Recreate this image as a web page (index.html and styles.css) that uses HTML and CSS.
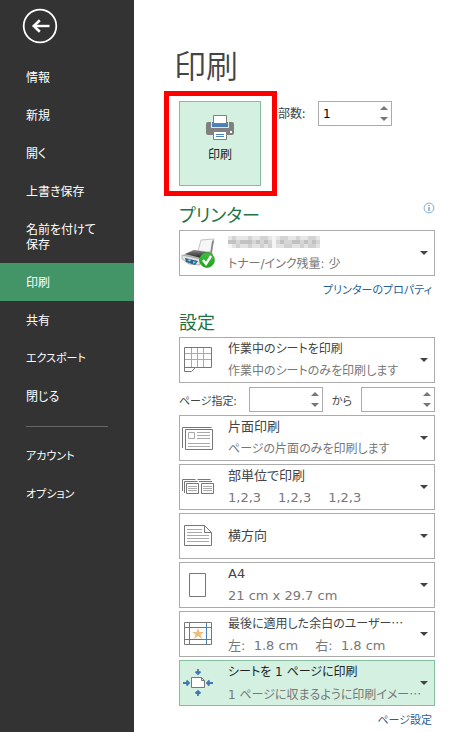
FILE: index.html
```html
<!DOCTYPE html>
<html lang="ja">
<head>
  <meta charset="UTF-8">
  <title>印刷</title>
  <link rel="stylesheet" href="styles.css">
</head>
<body>
  <nav class="sidebar">
    <button class="back" type="button" aria-label="戻る">
      <svg width="36" height="36" viewBox="0 0 36 36" fill="none" stroke="#fff">
        <circle cx="18" cy="18" r="16.3" stroke-width="1.8"/>
        <path d="M27.5 18H12" stroke-width="2.4"/>
        <path d="M17.8 12.3L11.8 18l6 5.700" stroke-width="2.6"/>
      </svg>
    </button>
    <a href="#">情報</a>
    <a href="#">新規</a>
    <a href="#">開く</a>
    <a href="#">上書き保存</a>
    <a href="#">名前を付けて<br>保存</a>
    <a href="#" class="active">印刷</a>
    <a href="#">共有</a>
    <a href="#" class="kana">エクスポート</a>
    <a href="#">閉じる</a>
    <hr>
    <a href="#" class="kana">アカウント</a>
    <a href="#" class="kana">オプション</a>
  </nav>

  <main>
    <h1>印刷</h1>

    <div class="panel">
      <div class="print-row">
        <div class="highlight">
          <button class="print-button" type="button">
            <svg width="28" height="25" viewBox="0 0 28 25">
              <path d="M2 7h24q2 0 2 2v9q0 2-2 2H2q-2 0-2-2V9q0-2 2-2z" fill="#808080"/>
              <path d="M5 6h18v7H5z" fill="#d3f0e0"/>
              <path d="M6 7h16v5H6z" fill="#4a80b8"/>
              <path d="M7.5 .5h13v8h-13zM7.5 16.5h13v8h-13z" fill="#fff" stroke="#808080"/>
              <path d="M10 19.5h8M10 21.5h8" stroke="#4a80b8"/>
              <path d="M24 16h2v2h-2z" fill="#fff"/>
            </svg>
            <span>印刷</span>
          </button>
        </div>
        <label class="copies-label" for="copies">部数:</label>
        <div class="spinner">
          <input id="copies" type="text" inputmode="numeric" value="1">
          <button class="up" type="button" aria-label="部数を増やす"></button>
          <button class="down" type="button" aria-label="部数を減らす"></button>
        </div>
      </div>

      <div class="section-head">
        <h2>プリンター</h2>
        <svg class="info" width="12" height="12" viewBox="0 0 12 12" fill="none">
          <circle cx="6" cy="6" r="4.9" stroke="#7fb0dc"/>
          <path d="M6 5v4M6 3v1" stroke="#3c6fb4"/>
        </svg>
      </div>
      <button class="option" type="button" aria-haspopup="listbox">
        <svg class="icon" width="36" height="30" viewBox="0 0 36 30">
          <defs>
            <linearGradient id="body" x1="0" y1="0" x2="0" y2="1">
              <stop offset="0" stop-color="#888"/><stop offset="1" stop-color="#222"/>
            </linearGradient>
            <linearGradient id="ok" x1="0" y1="0" x2="0" y2="1">
              <stop offset="0" stop-color="#45bd45"/><stop offset="1" stop-color="#1fa51c"/>
            </linearGradient>
          </defs>
          <path d="M20 2l13-1-3 13-13-1z" fill="#f6f6f6" stroke="#c4c4c4"/>
          <path d="M31 3l2-1-2 13-2 1z" fill="#888"/>
          <path d="M2 17l11-5 19 3v4l-13 5-16-4z" fill="#bbb"/>
          <path d="M4 16l9-4 18 3-11 5z" fill="url(#body)"/>
          <path d="M1 17l18 4v6l-11-1-7-5z" fill="#e4e4e4" stroke="#999" stroke-width=".7"/>
          <path d="M4 20l13 3-3 4-9-3z" fill="#315f85"/>
          <path d="M6 22l4-1-1 3zM12 23l3 1-3 2z" fill="#6fd0ed"/>
          <circle cx="26" cy="22" r="7.5" fill="url(#ok)" stroke="#239b20" stroke-width=".6"/>
          <path d="M22 22l3 4 5-8" fill="none" stroke="#fff" stroke-width="2.4"/>
        </svg>
        <span class="text">
          <svg class="masked" width="92" height="12" viewBox="0 0 23 3" shape-rendering="crispEdges" stroke-width="1">
            <path d="M0 .5h23" stroke="#e6e6e6"/>
            <path d="M0 1.5h23" stroke="#d6d6d6"/>
            <path d="M0 2.5h23" stroke="#e2e2e2"/>
            <path d="M1 .5h1M5 .5h1M8 .5h2M13 .5h2M17 .5h1M20 .5h2" stroke="#d4d4d4"/>
            <path d="M0 1.5h2M3 1.5h3M7 1.5h1M9 1.5h1M13 1.5h1M16 1.5h2M19 1.5h1M21 1.5h1" stroke="#c2c2c2"/>
            <path d="M2 2.5h1M5 2.5h1M8 2.5h1M10 2.5h1M14 2.5h2M18 2.5h1M20 2.5h2" stroke="#d0d0d0"/>
            <path d="M11 .5h1M11 1.5h1M11 2.5h1M0 2.5h1" stroke="#f4f4f4"/>
          </svg>
          <small>トナー/インク残量: 少</small>
        </span>
      </button>
      <div class="link-row"><a href="#">プリンターのプロパティ</a></div>

      <div class="section-head settings-head">
        <h2>設定</h2>
      </div>
      <div class="options">
        <button class="option" type="button" aria-haspopup="listbox">
          <svg class="icon" width="36" height="30" viewBox="0 0 36 30" fill="none">
            <path d="M10.5 3v20M16.5 3v20M22.5 3v20M4 8.5h26M4 14.5h26" stroke="#aaa"/>
            <path d="M3.5 2.5h27v20h-16l-4 4h-7zM3.5 22.5h11" stroke="#777"/>
          </svg>
          <span class="text"><b>作業中のシートを印刷</b><small>作業中のシートのみを印刷します</small></span>
        </button>

        <div class="pages-row">
          <label class="pages-label" for="from">ページ指定:</label>
          <div class="spinner">
            <input id="from" type="text" inputmode="numeric">
            <button class="up" type="button" aria-label="開始ページを増やす"></button>
            <button class="down" type="button" aria-label="開始ページを減らす"></button>
          </div>
          <label class="to-label" for="to">から</label>
          <div class="spinner">
            <input id="to" type="text" inputmode="numeric">
            <button class="up" type="button" aria-label="終了ページを増やす"></button>
            <button class="down" type="button" aria-label="終了ページを減らす"></button>
          </div>
        </div>

        <button class="option" type="button" aria-haspopup="listbox">
          <svg class="icon" width="36" height="30" viewBox="0 0 36 30" fill="none">
            <path d="M1.5 25V4.5h29M4.5 6.5h27v20h-27z" stroke="#777"/>
            <path d="M7.5 9.5h6v6h-6zM16 9.5h13M16 12.5h13M16 15.5h13M7 20.5h22M7 23.5h22" stroke="#aaa"/>
          </svg>
          <span class="text"><b class="wide">片面印刷</b><small>ページの片面のみを印刷します</small></span>
        </button>

        <button class="option" type="button" aria-haspopup="listbox">
          <svg class="icon" width="36" height="30" viewBox="0 0 36 30" fill="none">
            <path d="M1.5 19V7.5h13M3.5 21V9.5h13M16.5 7.5h13M18 9.5h13" stroke="#777"/>
            <path d="M5.5 11.5h12v10h-12zM20.5 11.5h12v10h-12z" stroke="#777"/>
            <path d="M7 14.5h9M7 16.5h9M7 18.5h9M22 14.5h9M22 16.5h9M22 18.5h9" stroke="#aaa"/>
          </svg>
          <span class="text"><b class="wide">部単位で印刷</b><small class="wide columns"><i>1,2,3</i><i>1,2,3</i><i>1,2,3</i></small></span>
        </button>

        <button class="option" type="button" aria-haspopup="listbox">
          <svg class="icon" width="36" height="30" viewBox="0 0 36 30" fill="none">
            <path d="M3.5 4.5h20l7 7v13h-27zM23.5 4.5v7h7" stroke="#777"/>
            <path d="M6 8.5h15M6 11.5h15M6 14.5h22M6 17.5h22M6 20.5h22" stroke="#aaa"/>
          </svg>
          <span class="text"><b class="wide">横方向</b></span>
        </button>

        <button class="option" type="button" aria-haspopup="listbox">
          <svg class="icon" width="36" height="30" viewBox="0 0 36 30" fill="none">
            <path d="M8.5 3.5h16v23h-16z" fill="#fff" stroke="#777"/>
          </svg>
          <span class="text"><b class="wide">A4</b><small class="wide">21 cm x 29.7 cm</small></span>
        </button>

        <button class="option" type="button" aria-haspopup="listbox">
          <svg class="icon" width="36" height="30" viewBox="0 0 36 30" fill="none">
            <path d="M3.5 3.5h27v22h-27z" stroke="#777"/>
            <path d="M8.5 4v21M25.5 4v21M4 8.5h26M4 20.5h26" stroke="#4a80b8"/>
            <path d="M17 9l1.5 4H23l-3.5 2.5L21 20l-4-3-4 3 1.5-4.5L11 13h4.500z" fill="#edbd7b"/>
          </svg>
          <span class="text"><b>最後に適用した余白のユーザー<span class="more">…</span></b><small class="wide columns"><i>左:&nbsp; 1.8 cm</i><i>右:&nbsp; 1.8 cm</i></small></span>
        </button>

        <button class="option selected" type="button" aria-haspopup="listbox">
          <svg class="icon" width="36" height="30" viewBox="0 0 36 30" fill="none">
            <path d="M10.5 9.5h10l3 3v7h-13zM20.5 9.5v3h3" fill="#fff" stroke="#777"/>
            <path d="M17 1v5M14.5 3.5L17 6l2.5-2.5M17 28v-5M14.5 25.5L17 23l2.5 2.5M2 15h6M5.5 12.5L8 15l-2.5 2.5M32 15h-6M28.5 12.5L26 15l2.5 2.5" stroke="#4377ae" stroke-width="1.8"/>
          </svg>
          <span class="text"><b>シートを 1 ページに印刷</b><small>1 ページに収まるように印刷イメー<span class="more">…</span></small></span>
        </button>
      </div>
      <div class="link-row"><a href="#">ページ設定</a></div>
    </div>
  </main>
</body>
</html>
```

FILE: styles.css
```css
* {
  box-sizing: border-box;
}
body {
  display: flex;
  min-height: 100vh;
  margin: 0;
  background: #fff;
  color: #444;
  font-family: "Noto Sans CJK JP", sans-serif;
  font-feature-settings: "palt";
  font-size: 12px;
}
button, input {
  margin: 0;
  padding: 0;
  border: 0;
  background: none;
  color: inherit;
  font: inherit;
  font-feature-settings: inherit;
}
button {
  cursor: pointer;
}
a {
  text-decoration: none;
}

/* left menu */
.sidebar {
  flex: none;
  width: 134px;
  padding-top: 8px;
  background: #333;
}
.sidebar a {
  display: block;
  padding: 11px 26px 12px;
  color: #fff;
  line-height: 15px;
  white-space: nowrap;
}
.sidebar a.kana {
  font-size: 11px;
}
.sidebar a.active {
  background: #439467;
}
.sidebar hr {
  height: 1px;
  margin: 11px 26px 10px;
  border: 0;
  background: #666;
}
.back {
  display: block;
  margin: 0 0 14px 22px;
}
.back svg {
  display: block;
}

/* print panel */
main {
  flex: 1;
  min-width: 0;
  padding: 44px 14px 0 40px;
}
h1 {
  margin: 0 0 17px;
  font-size: 32px;
  font-weight: 350;
  line-height: 40px;
}
.panel {
  padding-left: 5px;
}
.print-row {
  display: flex;
}
.highlight {
  position: relative;
  margin-right: 17px;
}
.highlight::after {
  content: "";
  position: absolute;
  inset: -10px -16px -10px -15px;
  border: 5px solid #f00;
  pointer-events: none;
}
.print-button {
  display: flex;
  flex-direction: column;
  align-items: center;
  gap: 4px;
  width: 82px;
  height: 85px;
  padding-top: 13px;
  border: 1px solid #86bfa0;
  background: #d3f0e0;
  color: #222;
  line-height: 20px;
}
.copies-label {
  width: 40px;
  line-height: 24px;
}
.spinner {
  display: grid;
  grid-template-columns: 1fr 15px;
  grid-template-rows: 1fr 1fr;
  width: 74px;
  height: 25px;
  border: 1px solid #ababab;
}
.spinner input {
  grid-row: 1 / 3;
  width: 100%;
  min-width: 0;
  padding-left: 4px;
  color: #000;
  font-family: "DejaVu Sans", sans-serif;
}
.spinner button {
  display: flex;
  align-items: center;
  justify-content: center;
}
.spinner button::before {
  content: "";
  border: 4px solid transparent;
}
.spinner .up::before {
  border-top: 0;
  border-bottom-color: #777;
}
.spinner .down::before {
  border-bottom: 0;
  border-top-color: #777;
}
.section-head {
  display: flex;
  justify-content: space-between;
  margin-top: 12px;
}
.settings-head {
  margin-top: 3px;
}
h2 {
  margin: 0;
  color: #217346;
  font-size: 18px;
  font-weight: 400;
  line-height: 32px;
}
.info {
  margin-top: 4px;
}

/* drop-down boxes */
.options {
  display: flex;
  flex-direction: column;
  gap: 3px;
}
.option {
  display: flex;
  align-items: center;
  width: 100%;
  height: 46px;
  padding-right: 6px;
  border: 1px solid #ababab;
  font-family: "DejaVu Sans", "Noto Sans CJK JP", sans-serif;
  line-height: 22px;
  text-align: left;
}
.option::after {
  content: "";
  border: 4px solid transparent;
  border-top-color: #444;
  border-bottom: 0;
}
.option.selected {
  border-color: #86bfa0;
  background: #d3f0e0;
  color: #222;
}
.icon {
  flex: none;
  margin: 0 11px 0 1px;
}
.text {
  flex: 1;
  min-width: 0;
}
.text b, .text small {
  display: block;
  font-size: 12px;
  font-weight: 400;
  white-space: nowrap;
}
.text small {
  color: #777;
}
.text .wide {
  font-size: 13px;
}
.text .columns {
  display: flex;
  gap: 17px;
}
.text i {
  font-style: normal;
}
.more {
  font-family: "Noto Sans CJK JP", sans-serif;
}
.masked {
  display: block;
  margin: 5px 0;
}
.pages-row {
  display: flex;
  align-items: center;
  margin-top: 1px;
}
.pages-label {
  width: 70px;
  font-size: 11px;
}
.to-label {
  flex: 1;
  font-size: 11px;
  text-align: center;
}
.link-row {
  padding-right: 3px;
  font-size: 11px;
  line-height: 26px;
  text-align: right;
}
.link-row a {
  color: #2a6099;
}
```
